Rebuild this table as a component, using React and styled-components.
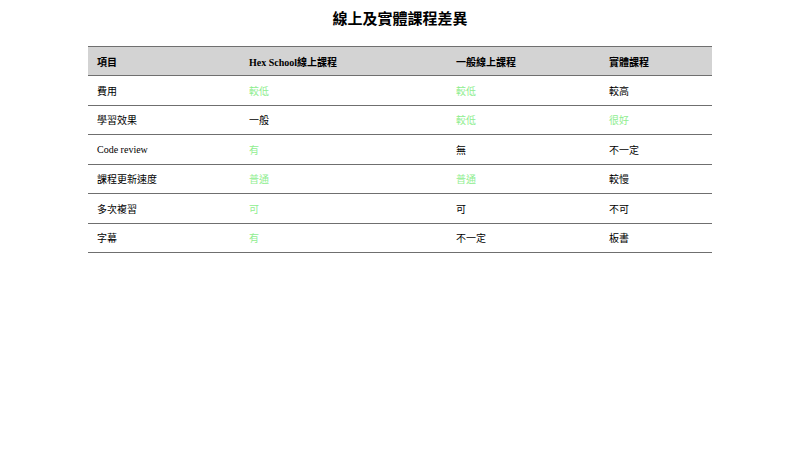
import React from "react";
import styled, { createGlobalStyle } from "styled-components";

const Global = createGlobalStyle`
  html, body { margin: 0; padding: 0; background: #fff; }
  body { font-family: "Liberation Serif", "Noto Sans CJK TC", serif; color: #000; }
`;

const Page = styled.div`
  display: flex;
  flex-direction: column;
  align-items: center;
  padding-top: 9px;
`;

const Title = styled.h2`
  margin: 0 0 17px;
  font-family: "Liberation Serif", "Noto Sans CJK TC", sans-serif;
  font-size: 15px;
  font-weight: 700;
  line-height: 20px;
`;

const Table = styled.table`
  width: 624px;
  border-collapse: collapse;
  font-size: 10px;
  table-layout: fixed;
`;

const Head = styled.thead`
  background: #d3d3d3;
`;

const Row = styled.tr`
  border-bottom: 1px solid #6f6f6f;
`;

const HeadRow = styled(Row)`
  border-top: 1px solid #6f6f6f;
`;

const Th = styled.th`
  text-align: left;
  font-weight: 700;
  padding: 0 9px;
  height: 29px;
  width: ${(p) => p.$w}px;
  box-sizing: border-box;
`;

const Td = styled.td`
  padding: 0 9px;
  height: 28.5px;
  color: ${(p) => (p.$good ? "#90ee90" : "#000")};
`;

const cols = [
  { label: "項目", w: 152 },
  { label: "Hex School線上課程", w: 207 },
  { label: "一般線上課程", w: 153 },
  { label: "實體課程", w: 112 },
];

const rows = [
  ["費用", ["較低", 1], ["較低", 1], ["較高", 0]],
  ["學習效果", ["一般", 0], ["較低", 1], ["很好", 1]],
  ["Code review", ["有", 1], ["無", 0], ["不一定", 0]],
  ["課程更新速度", ["普通", 1], ["普通", 1], ["較慢", 0]],
  ["多次複習", ["可", 1], ["可", 0], ["不可", 0]],
  ["字幕", ["有", 1], ["不一定", 0], ["板書", 0]],
];

export default function App() {
  return (
    <>
      <Global />
      <Page>
        <Title>線上及實體課程差異</Title>
        <Table>
          <Head>
            <HeadRow>
              {cols.map((c) => (
                <Th key={c.label} $w={c.w}>
                  {c.label}
                </Th>
              ))}
            </HeadRow>
          </Head>
          <tbody>
            {rows.map(([name, ...cells]) => (
              <Row key={name}>
                <Td>{name}</Td>
                {cells.map(([t, g], i) => (
                  <Td key={i} $good={!!g}>
                    {t}
                  </Td>
                ))}
              </Row>
            ))}
          </tbody>
        </Table>
      </Page>
    </>
  );
}
